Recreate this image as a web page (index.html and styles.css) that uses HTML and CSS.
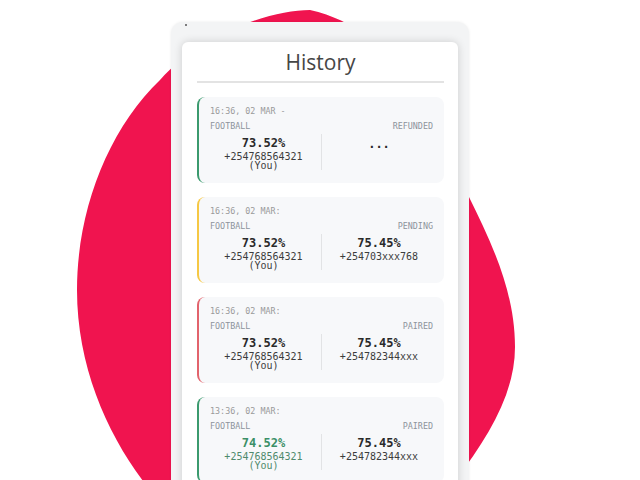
FILE: index.html
```html
<!DOCTYPE html>
<html>
<head>
<meta charset="utf-8">
<link rel="stylesheet" href="styles.css">
</head>
<body>
<div class="stage">
  <svg class="blob" width="640" height="480" viewBox="0 0 640 480">
    <path d="M310,10 C270,10 200,35 160,80 C108,130 77,210 77,290 C77,370 110,440 150,490 L440,500 C480,450 515,400 515,347 C515,290 490,240 469,197 C430,120 400,30 310,10 Z" fill="#f0144f"/>
  </svg>
  <div class="phone">
    <span class="cam"></span>
    <div class="screen">
      <h1 class="title">History</h1>
      <div class="list">
        <div class="card green">
          <div class="date">16:36, 02 MAR -</div>
          <div class="meta"><span>FOOTBALL</span><span>REFUNDED</span></div>
          <div class="cols">
            <div class="col">
              <div class="val">73.52%</div>
              <div class="num">+254768564321</div>
              <div class="num">(You)</div>
            </div>
            <div class="div"></div>
            <div class="col">
              <div class="val dots">...</div>
            </div>
          </div>
        </div>
        <div class="card yellow">
          <div class="date">16:36, 02 MAR:</div>
          <div class="meta"><span>FOOTBALL</span><span>PENDING</span></div>
          <div class="cols">
            <div class="col">
              <div class="val">73.52%</div>
              <div class="num">+254768564321</div>
              <div class="num">(You)</div>
            </div>
            <div class="div"></div>
            <div class="col">
              <div class="val">75.45%</div>
              <div class="num">+254703xxx768</div>
            </div>
          </div>
        </div>
        <div class="card red">
          <div class="date">16:36, 02 MAR:</div>
          <div class="meta"><span>FOOTBALL</span><span>PAIRED</span></div>
          <div class="cols">
            <div class="col">
              <div class="val">73.52%</div>
              <div class="num">+254768564321</div>
              <div class="num">(You)</div>
            </div>
            <div class="div"></div>
            <div class="col">
              <div class="val">75.45%</div>
              <div class="num">+254782344xxx</div>
            </div>
          </div>
        </div>
        <div class="card green win">
          <div class="date">13:36, 02 MAR:</div>
          <div class="meta"><span>FOOTBALL</span><span>PAIRED</span></div>
          <div class="cols">
            <div class="col mine">
              <div class="val">74.52%</div>
              <div class="num">+254768564321</div>
              <div class="num">(You)</div>
            </div>
            <div class="div"></div>
            <div class="col">
              <div class="val">75.45%</div>
              <div class="num">+254782344xxx</div>
            </div>
          </div>
        </div>
      </div>
    </div>
  </div>
</div>
</body>
</html>
```

FILE: styles.css
```css
html, body {
  margin: 0;
  padding: 0;
  background: #ffffff;
  overflow: hidden;
}
.stage {
  position: relative;
  width: 640px;
  height: 480px;
  overflow: hidden;
}
.blob {
  position: absolute;
  left: 0;
  top: 0;
}
.phone {
  position: absolute;
  left: 171px;
  top: 22px;
  width: 276px;
  height: 520px;
  padding: 20px 11px 0 11px;
  background: #f3f4f5;
  border-radius: 12px;
  box-shadow: 0 0 3px rgba(0,0,0,0.08);
}
.cam {
  position: absolute;
  left: 14px;
  top: 2px;
  width: 2px;
  height: 2px;
  border-radius: 50%;
  background: #555;
}
.screen {
  background: #ffffff;
  border-radius: 6px;
  height: 100%;
  padding: 6px 14px 0 15px;
  box-shadow: 0 0 8px rgba(0,0,0,0.16);
}
.title {
  margin: 0;
  font-family: "Open Sans", "Liberation Sans", sans-serif;
  font-weight: 400;
  font-size: 21px;
  line-height: 28px;
  color: #464646;
  text-align: center;
  padding-bottom: 5px;
  border-bottom: 2px solid #e3e3e3;
}
.list {
  display: flex;
  flex-direction: column;
  gap: 14px;
  margin-top: 14px;
}
.card {
  height: 86px;
  box-sizing: border-box;
  background: #f7f8fa;
  border-radius: 8px;
  border-left: 2px solid #3b9a6e;
  padding: 9px 11px 0 11px;
  font-family: "DejaVu Sans Mono", monospace;
}
.card.yellow { border-left-color: #f6c844; }
.card.red { border-left-color: #e2636c; }
.date {
  font-size: 8.4px;
  line-height: 10px;
  color: #9a9a9a;
}
.meta {
  display: flex;
  justify-content: space-between;
  margin-top: 5px;
  font-size: 8.4px;
  line-height: 10px;
  color: #8d939c;
}
.cols {
  display: grid;
  grid-template-columns: 1fr 1px 1fr;
  margin-top: 3px;
  height: 35px;
}
.div {
  background: #e2e3e5;
}
.col {
  text-align: center;
  padding-top: 2px;
}
.col:first-child {
  padding-right: 4px;
}
.col:last-child {
  padding-left: 3px;
}
.val {
  font-size: 12px;
  line-height: 14px;
  font-weight: bold;
  color: #2a2a2a;
  margin-bottom: 2px;
}
.val.dots {
  margin-top: 1px;
}
.num {
  font-size: 10px;
  line-height: 9px;
  color: #3c3c3c;
}
.mine .val { color: #3a8f66; }
.mine .num { color: #4f8a6c; }
```
